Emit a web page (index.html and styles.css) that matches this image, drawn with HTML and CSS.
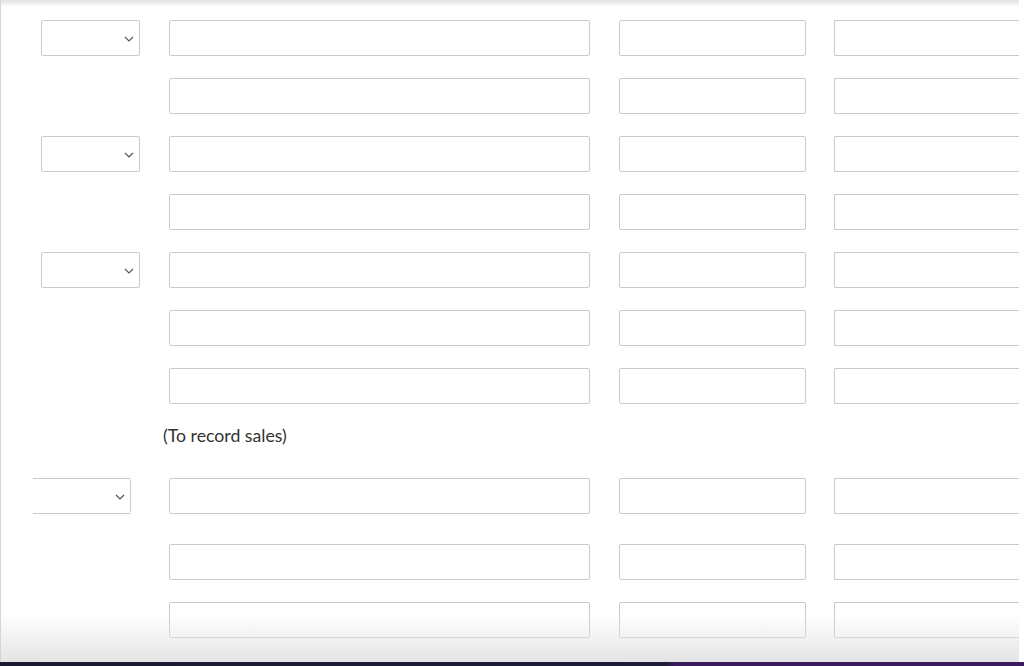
FILE: index.html
```html
<!DOCTYPE html>
<html>
<head>
<meta charset="utf-8">
<link rel="stylesheet" href="styles.css">
</head>
<body>
<div class="sheet">
  <div class="rows">
    <div class="row"><div class="sel"><svg class="chev" viewBox="0 0 10 6" width="10" height="6"><path d="M1 1 L5 5 L9 1" fill="none" stroke="#555" stroke-width="1.2"/></svg></div><div class="in w1"></div><div class="in w2"></div><div class="in w3"></div></div>
    <div class="row"><div class="spacer"></div><div class="in w1"></div><div class="in w2"></div><div class="in w3"></div></div>
    <div class="row"><div class="sel"><svg class="chev" viewBox="0 0 10 6" width="10" height="6"><path d="M1 1 L5 5 L9 1" fill="none" stroke="#555" stroke-width="1.2"/></svg></div><div class="in w1"></div><div class="in w2"></div><div class="in w3"></div></div>
    <div class="row"><div class="spacer"></div><div class="in w1"></div><div class="in w2"></div><div class="in w3"></div></div>
    <div class="row"><div class="sel"><svg class="chev" viewBox="0 0 10 6" width="10" height="6"><path d="M1 1 L5 5 L9 1" fill="none" stroke="#555" stroke-width="1.2"/></svg></div><div class="in w1"></div><div class="in w2"></div><div class="in w3"></div></div>
    <div class="row"><div class="spacer"></div><div class="in w1"></div><div class="in w2"></div><div class="in w3"></div></div>
    <div class="row"><div class="spacer"></div><div class="in w1"></div><div class="in w2"></div><div class="in w3"></div></div>
    <p class="note">(To record sales)</p>
    <div class="row row-b"><div class="sel sel-cut"><svg class="chev" viewBox="0 0 10 6" width="10" height="6"><path d="M1 1 L5 5 L9 1" fill="none" stroke="#555" stroke-width="1.2"/></svg></div><div class="in w1"></div><div class="in w2"></div><div class="in w3"></div></div>
    <div class="row row-c"><div class="spacer"></div><div class="in w1"></div><div class="in w2"></div><div class="in w3"></div></div>
    <div class="row"><div class="spacer"></div><div class="in w1"></div><div class="in w2"></div><div class="in w3"></div></div>
  </div>
</div>
<div class="bar"></div>
</body>
</html>
```
FILE: styles.css
```css
html, body {
  margin: 0;
  padding: 0;
  background: #fff;
  overflow: hidden;
}
body {
  font-family: Lato, "Liberation Sans", sans-serif;
  width: 1024px;
  height: 666px;
}
.sheet {
  position: relative;
  height: 662px;
  width: 1019px;
  overflow: hidden;
  border-left: 1px solid #d6d6d6;
  box-sizing: border-box;
  background: #fff;
}
.sheet::before {
  content: "";
  position: absolute;
  left: 0;
  right: 0;
  top: 0;
  height: 7px;
  background: linear-gradient(to bottom, #e2e2e2, rgba(255,255,255,0));
  pointer-events: none;
  z-index: 2;
}
.sheet::after {
  content: "";
  position: absolute;
  left: 0;
  right: 0;
  bottom: 0;
  height: 48px;
  background: linear-gradient(to bottom, rgba(230,230,230,0), rgba(228,228,228,1));
  pointer-events: none;
  z-index: 2;
}
.rows {
  padding-top: 20px;
  padding-left: 40px;
  display: flex;
  flex-direction: column;
  gap: 22px;
}
.row {
  display: flex;
  height: 36px;
  gap: 29px;
  flex: none;
}
.sel, .in {
  box-sizing: border-box;
  height: 36px;
  border: 1px solid #cacaca;
  border-radius: 2px;
  background: #fff;
  flex: none;
}
.sel {
  width: 99px;
  position: relative;
}
.spacer {
  width: 99px;
  flex: none;
}
.sel-cut {
  margin-left: -8px;
  margin-right: 9px;
  width: 98px;
  border-left: none;
  border-radius: 0 2px 2px 0;
}
.chev {
  position: absolute;
  right: 5px;
  top: 15px;
}
.w1 { width: 421px; }
.w2 { width: 187px; }
.w3 { width: 200px; margin-left: -1px; border-right: none; }
.note {
  margin: 0;
  padding-left: 122px;
  height: 22px;
  line-height: 22px;
  font-size: 17.7px;
  color: #333;
  position: relative;
  top: -1px;
}
.row-b { margin-top: 8px; }
.row-c { margin-top: 8px; }
.bar {
  height: 4px;
  background: linear-gradient(to right, #1b1a30 0%, #1f1c3a 65%, #3a1b5e 66%, #3b1a60 100%);
}
```
